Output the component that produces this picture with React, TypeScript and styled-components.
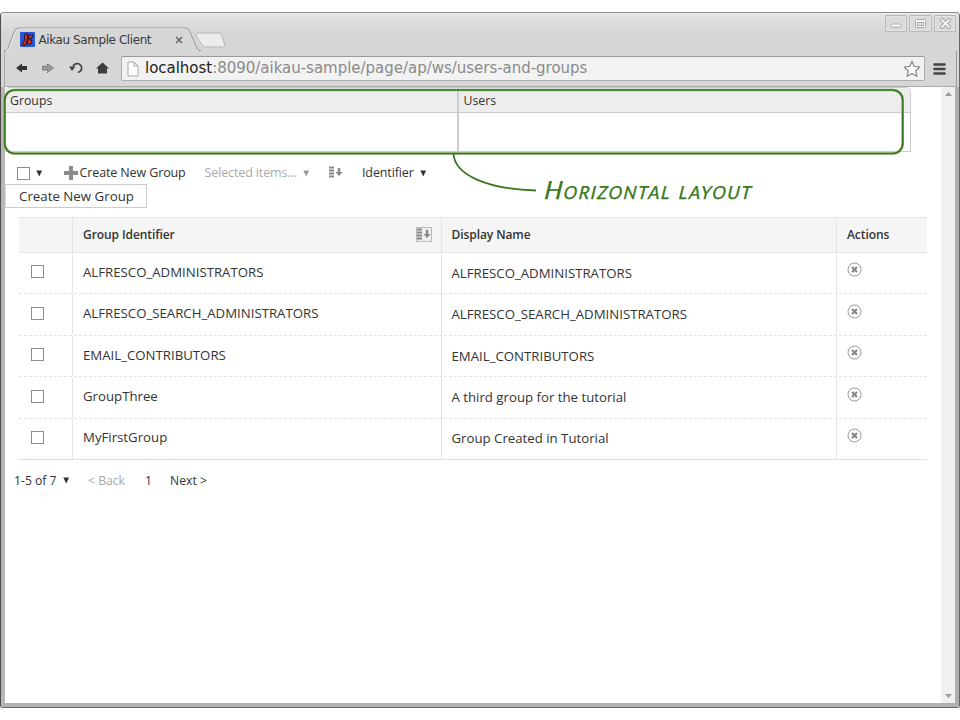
import React from "react";
import styled, { createGlobalStyle } from "styled-components";

const GREEN = "#39781c";

const Global = createGlobalStyle`
  * { box-sizing: border-box; }
  body { margin: 0; background: #fff; overflow: hidden; }
`;

const Page = styled.div`
  width: 960px;
  height: 720px;
  padding-top: 12px;
  background: #fff;
  font-family: "Open Sans", sans-serif;
  color: #333;
`;

const Window = styled.div`
  height: 696px;
  display: flex;
  flex-direction: column;
  border: 1px solid #666;
  border-top-color: #8b8b8b;
  border-left-color: #4c4a4a;
  border-radius: 4px 4px 3px 3px;
  background: #d6d6d6;
  overflow: hidden;
`;

const TitleBar = styled.div`
  height: 38px;
  flex: none;
  display: flex;
  background: linear-gradient(#e4e4e4, #d6d6d6 18px);
  border-top: 1px solid #eee;
`;

const Tab = styled.div`
  position: relative;
  width: 226px;
  height: 37px;
  padding: 13px 0 0 19px;
  display: flex;
  align-items: flex-start;
  font: 12px/25px "DejaVu Sans", sans-serif;
  letter-spacing: -0.42px;
  color: #3a3a3a;
`;

const TabShape = styled.svg`
  position: absolute;
  left: 0;
  top: 0;
`;

const Favicon = styled.svg`
  position: relative;
  margin-top: 5px;
  flex: none;
`;

const TabTitle = styled.span`
  position: relative;
  margin-left: 3.5px;
  padding-top: 1px;
  width: 131px;
  white-space: nowrap;
`;

const TabClose = styled.svg`
  position: relative;
  margin-top: 9px;
  margin-left: 5px;
`;

const WindowButtons = styled.div`
  margin-left: auto;
  padding: 1px 3px 0 0;
  display: flex;
  gap: 2px;
`;

const WindowButton = styled.div<{ $w: number }>`
  width: ${(p) => p.$w}px;
  height: 17px;
  border: 1px solid #b9b9b9;
  border-radius: 1px;
  background: #dadada;
  box-shadow: inset 0 0 0 1px #e2e2e2;
  display: flex;
  align-items: center;
  justify-content: center;
`;

const Toolbar = styled.div`
  height: 36px;
  flex: none;
  display: flex;
  align-items: flex-start;
  padding: 5px 0 0 11px;
  margin: 0 2px 0 3px;
  border-right: 1px solid #999;
  border-left: 1px solid #aaa;
  border-bottom: 1px solid #aaa;
`;

const NavIcons = styled.svg`
  flex: none;
`;

const UrlBar = styled.div`
  margin-left: 5px;
  width: 804px;
  height: 25px;
  border: 1px solid #aeaeae;
  border-top-color: #999;
  border-radius: 2px;
  background: #f2f2f2;
  display: flex;
  align-items: center;
  padding: 0 3px 0 5px;
  font: 15px/23px "DejaVu Sans", sans-serif;
  letter-spacing: -0.02px;
  color: #8a8a8a;
`;

const Url = styled.span`
  margin-left: 6px;
  flex: 1;
  white-space: nowrap;
`;

const Host = styled.span`
  color: #222;
`;

const MenuIcon = styled.svg`
  margin: 6px 0 0 8px;
`;

const Viewport = styled.div`
  flex: 1;
  display: flex;
  border: solid #aaa;
  border-width: 0 4px 4px;
  border-color: #aaa #aeaeae #b2b2b2 #b9b6b6;
  background: #fff;
`;

const Content = styled.div`
  position: relative;
  width: 936px;
  height: 616px;
`;

const ScrollBar = styled.div`
  width: 14px;
  background: #f0f0f0;
  display: flex;
  flex-direction: column;
  justify-content: space-between;
  align-items: center;
  padding: 5px 0 4px;
`;

const Panels = styled.div`
  display: flex;
  width: 906px;
  height: 65px;
  border: 1px solid #ccc;
  border-left: 0;
  border-radius: 5px 5px 0 0;
`;

const Panel = styled.div<{ $w?: number }>`
  ${(p) => (p.$w ? `width: ${p.$w}px; border-right: 2px solid #ccc;` : "flex: 1;")}
`;

const PanelTitle = styled.div<{ $pad: number }>`
  height: 25px;
  padding-left: ${(p) => p.$pad}px;
  border-bottom: 1px solid #ccc;
  background: #ededed;
  font-size: 12.3px;
  line-height: 25px;
  border-radius: 4px 4px 0 0;
`;

const Annotation = styled.svg`
  position: absolute;
  left: -3px;
  top: -1px;
  pointer-events: none;
`;

const Handwriting = styled.div`
  position: absolute;
  left: 540px;
  top: 86px;
  font: italic 400 25px/32px Lato, sans-serif;
  font-variant: small-caps;
  color: ${GREEN};
  letter-spacing: 1.6px;
  white-space: nowrap;
  transform: skewX(-7deg);
  -webkit-text-stroke: 0.3px ${GREEN};
`;

const Menu = styled.div`
  height: 22px;
  margin-top: 10px;
  padding-left: 12px;
  display: flex;
  align-items: center;
  font-size: 12.5px;
  letter-spacing: -0.12px;
  line-height: 22px;
  white-space: nowrap;
`;

const Check = styled.span`
  width: 13px;
  height: 13px;
  flex: none;
  border: 1px solid #8c8c8c;
  background: #fff;
`;

const MenuItem = styled.span<{ $left: number; $w: number; $muted?: boolean }>`
  margin-left: ${(p) => p.$left}px;
  width: ${(p) => p.$w}px;
  color: ${(p) => (p.$muted ? "#aaa" : "#333")};
`;

const Spaced = styled.svg<{ $left: number }>`
  margin-left: ${(p) => p.$left}px;
  flex: none;
`;

const Button = styled.div`
  width: 142px;
  height: 24px;
  border: 1px solid #ccc;
  border-left-color: #ddd;
  padding-left: 13px;
  font-size: 13.3px;
  line-height: 22px;
  white-space: nowrap;
  background: #fff;
`;

const Table = styled.div`
  width: 908px;
  margin: 9px 0 0 14px;
`;

const Row = styled.div<{ $last?: boolean }>`
  display: grid;
  grid-template-columns: 54px 369px 395px 90px;
  height: 41.45px;
  border-bottom: 1px ${(p) => (p.$last ? "solid #ddd" : "dashed #e2e2e2")};
  font-size: 13.22px;
`;

const HeadRow = styled(Row)`
  height: 36px;
  background: #f5f5f5;
  border-top: 1px solid #e6e6e6;
  border-bottom: 1px solid #e6e6e6;
  font-size: 12px;
  font-weight: 600;
  letter-spacing: -0.08px;
`;

const Cell = styled.div<{ $edge?: boolean; $pad: number; $lift?: number }>`
  display: flex;
  align-items: center;
  padding-left: ${(p) => p.$pad}px;
  padding-bottom: ${(p) => p.$lift ?? 0}px;
  border-right: ${(p) => (p.$edge ? "0" : "1px solid #e4e4e4")};
  white-space: nowrap;
`;

const Paging = styled.div`
  display: flex;
  align-items: center;
  height: 20px;
  margin-top: 10px;
  padding-left: 9px;
  font-size: 12.2px;
  white-space: nowrap;
`;

const Caret = ({ left, color = "#333" }: { left: number; color?: string }) => (
  <Spaced $left={left} width="7" height="8"><path d="M.3 1.500h5.800L3.200 7.500z" fill={color} /></Spaced>
);

const SortIcon = ({ left, boxed }: { left: number; boxed?: boolean }) => (
  <Spaced $left={left} width="17" height="16">
    {boxed && <rect x=".5" y=".5" width="15" height="14" fill="#eee" stroke="#bbb" />}
    <path d="M1 2.500h5M1 5.500h5M1 8.500h5M1 11.500h5" stroke="#888" strokeWidth="1.800" />
    <path d="M9.800 3h2.400v4h2.500L11 11 7.500 7h2.300z" fill="#888" />
  </Spaced>
);

const rows = [
  ["ALFRESCO_ADMINISTRATORS", "ALFRESCO_ADMINISTRATORS"],
  ["ALFRESCO_SEARCH_ADMINISTRATORS", "ALFRESCO_SEARCH_ADMINISTRATORS"],
  ["EMAIL_CONTRIBUTORS", "EMAIL_CONTRIBUTORS"],
  ["GroupThree", "A third group for the tutorial"],
  ["MyFirstGroup", "Group Created in Tutorial"],
];

export default function App() {
  return (
    <Page>
      <Global />
      <Window>
        <TitleBar>
          <Tab>
            <TabShape width="228" height="37">
              <path d="M3 37q3 0 4-3L13 18q1-4 5-4h166q4 0 5 4l7 16q1 3 5 3" fill="#d6d6d6" stroke="#999" />
              <path d="M5 36q3 0 4-3l5-14q1-4 5-4h164q4 0 5 4" fill="none" stroke="#e5e5e5" />
              <path d="M197 19h20q3 0 4 3l2.500 8q1 3-2 3h-17q-3 0-4-3l-5-8q-1-3 1.500-3z" fill="#ececec" stroke="#b8b8b8" />
            </TabShape>
            <Favicon width="15" height="15">
              <rect width="15" height="15" rx="1" fill="#2558dc" />
              <path d="M5 2h3L6 13H2l1-3h1zM9 3h4l-1 3h-2l-.5 2H12l-1 4H7z" fill="#e82d16" stroke="#241326" />
            </Favicon>
            <TabTitle>Aikau Sample Client</TabTitle>
            <TabClose width="8" height="8"><path d="M1 1l6 6M7 1L1 7" stroke="#666" strokeWidth="1.600" /></TabClose>
          </Tab>
          <WindowButtons>
            <WindowButton $w={22}>
              <svg width="14" height="12"><rect x="2" y="6" width="10" height="3" rx="1.500" fill="#fff" stroke="#aaa" /></svg>
            </WindowButton>
            <WindowButton $w={23}>
              <svg width="13" height="12"><rect x="1.500" y="1.500" width="10" height="8" rx="1" fill="#f5f5f5" stroke="#aaa" /><rect x="3.500" y="4.500" width="6" height="3" fill="#ddd" stroke="#aaa" /></svg>
            </WindowButton>
            <WindowButton $w={22}>
              <svg width="13" height="13"><path d="M3 3l7 7M10 3l-7 7" stroke="#a5a5a5" strokeWidth="4" strokeLinecap="round" /><path d="M3 3l7 7M10 3l-7 7" stroke="#f5f5f5" strokeWidth="2" strokeLinecap="round" /></svg>
            </WindowButton>
          </WindowButtons>
        </TitleBar>
        <Toolbar>
          <NavIcons width="100" height="25">
            <path d="M0 12l6-4.500v2.500h5v4H6v2.500z" fill="#333" />
            <path d="M37.500 12l-6-4.500v2.500h-5v4h5v2.500z" fill="#999" stroke="#555" strokeDasharray="1 1" />
            <path d="M57 10.500a4.500 4.500 0 1 1 5 6" fill="none" stroke="#444" strokeWidth="1.700" />
            <path d="M53 10.500h6.500l-3.500 4.500z" fill="#444" />
            <path d="M80 12.500l6.500-6 6.500 6h-2v5h-9v-5z" fill="#3c3c3c" />
          </NavIcons>
          <UrlBar>
            <svg width="12" height="16"><path d="M1 1h6l4 4v10H1zM7 1v4h4" fill="#fff" stroke="#aaa" /></svg>
            <Url><Host>localhost</Host>:8090/aikau-sample/page/ap/ws/users-and-groups</Url>
            <svg width="18" height="18"><path d="M9 1.200l2.300 5.200 5.500.6-4.100 3.700 1.200 5.600L9 13.500l-4.900 2.800 1.200-5.600L1.200 7l5.500-.6z" fill="#fff" stroke="#888" strokeWidth="1.200" strokeLinejoin="round" /></svg>
          </UrlBar>
          <MenuIcon width="13" height="14"><path d="M1.500 2.500h10M1.500 7h10M1.500 11.500h10" stroke="#444" strokeWidth="2.600" strokeLinecap="round" /></MenuIcon>
        </Toolbar>
        <Viewport>
          <Content>
            <Panels>
              <Panel $w={454}><PanelTitle $pad={5}>Groups</PanelTitle></Panel>
              <Panel><PanelTitle $pad={4.5}>Users</PanelTitle></Panel>
            </Panels>
            <Menu>
              <Check />
              <Caret left={6} />
              <Spaced $left={21} width="14" height="14"><path d="M5 0h4v5h5v4H9v5H5V9H0V5h5z" fill="#8b8b8b" /></Spaced>
              <MenuItem $left={1.5} $w={125}>Create New Group</MenuItem>
              <MenuItem $left={0} $w={93} $muted>Selected items...</MenuItem>
              <Caret left={5} color="#999" />
              <SortIcon left={18} />
              <MenuItem $left={17.5} $w={52}>Identifier</MenuItem>
              <Caret left={6} />
            </Menu>
            <Button>Create New Group</Button>
            <Table>
              <HeadRow>
                <Cell $pad={10} />
                <Cell $pad={10} $lift={1}>Group Identifier<SortIcon left={241} boxed /></Cell>
                <Cell $pad={9.5} $lift={1}>Display Name</Cell>
                <Cell $pad={10} $lift={1} $edge>Actions</Cell>
              </HeadRow>
              {rows.map(([id, name], i) => (
                <Row key={id} $last={i === rows.length - 1}>
                  <Cell $pad={12} $lift={3}><Check /></Cell>
                  <Cell $pad={10} $lift={3}>{id}</Cell>
                  <Cell $pad={9.5} $lift={1}>{name}</Cell>
                  <Cell $pad={10} $lift={2} $edge>
                    <svg width="15" height="20"><circle cx="7.500" cy="7.500" r="6.500" fill="#fff" stroke="#999" /><path d="M5 5l5 5M10 5l-5 5" stroke="#888" strokeWidth="2.200" /></svg>
                  </Cell>
                </Row>
              ))}
            </Table>
            <Paging>
              <MenuItem $left={0} $w={43}>1-5 of 7</MenuItem>
              <Caret left={6} />
              <MenuItem $left={18} $w={57} $muted>&lt; Back</MenuItem>
              <MenuItem $left={0} $w={25}>1</MenuItem>
              <MenuItem $left={0} $w={50}>Next &gt;</MenuItem>
            </Paging>
            <Annotation width="920" height="120" fill="none" stroke={GREEN}>
              <rect x="2.700" y="4" width="898" height="63.500" rx="10" stroke="#91b77f" strokeWidth="2.600" />
              <rect x="2.700" y="4" width="898" height="63.500" rx="10" strokeWidth="1.600" />
              <path d="M451.500 68C453 89 485 103 534 104.500" strokeWidth="1.800" />
            </Annotation>
            <Handwriting>Horizontal layout</Handwriting>
          </Content>
          <ScrollBar>
            <svg width="7" height="5"><path d="M0 4h7L3.500 0z" fill="#999" /></svg>
            <svg width="7" height="5"><path d="M0 0h7L3.500 4z" fill="#999" /></svg>
          </ScrollBar>
        </Viewport>
      </Window>
    </Page>
  );
}
